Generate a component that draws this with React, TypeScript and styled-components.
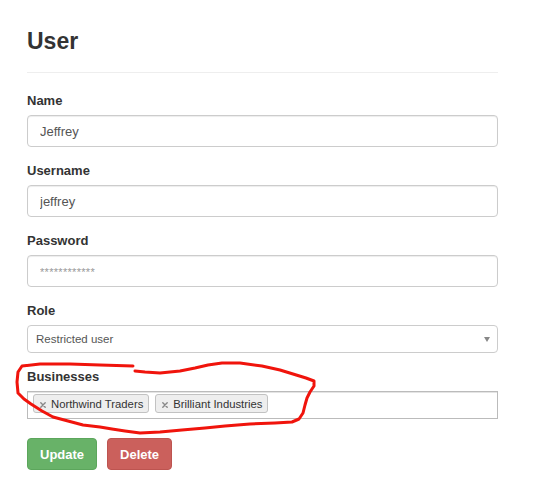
import React from 'react';
import styled, { createGlobalStyle } from 'styled-components';

const GlobalStyle = createGlobalStyle`
  body {
    margin: 0;
    background: #fff;
    color: #333;
    font-family: "Liberation Sans", Arial, sans-serif;
  }
`;

const Page = styled.div`
  position: relative;
  width: 533px;
  height: 500px;
  box-sizing: border-box;
  padding: 28px 35px 0 27px;
`;

const Title = styled.h1`
  margin: 0 0 18px;
  font-size: 23px;
  line-height: 26px;
  font-weight: bold;
  color: #333;
`;

const Divider = styled.hr`
  margin: 0 0 19px;
  border: 0;
  border-top: 1px solid #eee;
`;

const FormGroup = styled.div`
  margin-bottom: 15px;
`;

const Label = styled.label`
  display: block;
  margin-bottom: 5px;
  font-size: 13px;
  line-height: 18px;
  font-weight: bold;
  color: #333;
`;

const TextInput = styled.input`
  display: block;
  box-sizing: border-box;
  width: 100%;
  height: 32px;
  margin: 0;
  padding: 0 12px;
  font-family: "Liberation Sans", Arial, sans-serif;
  font-size: 13px;
  color: #555;
  background: #fff;
  border: 1px solid #ccc;
  border-radius: 4px;
  box-shadow: inset 0 1px 1px rgba(0, 0, 0, 0.075);
  outline: none;

  &::placeholder {
    color: #999;
    font-size: 11px;
    letter-spacing: 0.3px;
  }
`;

const SelectBox = styled.div`
  display: flex;
  align-items: center;
  justify-content: space-between;
  box-sizing: border-box;
  height: 28px;
  padding: 0 7px 0 8px;
  font-size: 11.5px;
  color: #555;
  background: #fff;
  border: 1px solid #ccc;
  border-radius: 4px;
`;

const Caret = styled.span`
  width: 0;
  height: 0;
  border-left: 3px solid transparent;
  border-right: 3px solid transparent;
  border-top: 5px solid #888;
`;

const TagBox = styled.div`
  display: flex;
  align-items: flex-start;
  gap: 6px;
  box-sizing: border-box;
  height: 28px;
  padding: 2px 5px;
  background: #fff;
  border: 1px solid #bbb;
  box-shadow: inset 0 1px 0 #e4e4e4;
`;

const Tag = styled.span`
  display: inline-flex;
  align-items: center;
  gap: 5px;
  box-sizing: border-box;
  height: 19px;
  padding: 0 5px 0 6px;
  font-size: 11.3px;
  color: #333;
  background: #eee;
  border: 1px solid #c2c2c2;
  border-radius: 3px;
`;

const Actions = styled.div`
  display: flex;
  gap: 10px;
  margin-top: 19px;
`;

const Button = styled.button<{ $tone: 'success' | 'danger' }>`
  box-sizing: border-box;
  height: 32px;
  padding: 0 12px;
  font-family: "Liberation Sans", Arial, sans-serif;
  font-size: 13px;
  font-weight: bold;
  color: #fff;
  border-radius: 4px;
  cursor: pointer;
  background: ${p => (p.$tone === 'success' ? '#68b268' : '#cb605c')};
  border: 1px solid ${p => (p.$tone === 'success' ? '#5ca65c' : '#bd5450')};
`;

const Scribble = styled.svg`
  position: absolute;
  top: 0;
  left: 0;
  pointer-events: none;
`;

const RemoveIcon = () => (
  <svg width="6" height="6" viewBox="0 0 6 6" style={{ marginTop: 2 }}>
    <path d="M0.8 0.8 L5.2 5.2 M5.2 0.8 L0.8 5.2" stroke="#888" strokeWidth="1.4" strokeLinecap="round" />
  </svg>
);

const businesses = ['Northwind Traders', 'Brilliant Industries'];

const App: React.FC = () => {
  return (
    <>
      <GlobalStyle />
      <Page>
        <Title>User</Title>
        <Divider />

        <FormGroup>
          <Label>Name</Label>
          <TextInput defaultValue="Jeffrey" />
        </FormGroup>

        <FormGroup>
          <Label>Username</Label>
          <TextInput defaultValue="jeffrey" />
        </FormGroup>

        <FormGroup>
          <Label>Password</Label>
          <TextInput placeholder="************" />
        </FormGroup>

        <FormGroup>
          <Label>Role</Label>
          <SelectBox>
            <span>Restricted user</span>
            <Caret />
          </SelectBox>
        </FormGroup>

        <FormGroup>
          <Label>Businesses</Label>
          <TagBox>
            {businesses.map(b => (
              <Tag key={b}>
                <RemoveIcon />
                {b}
              </Tag>
            ))}
          </TagBox>
        </FormGroup>

        <Actions>
          <Button $tone="success">Update</Button>
          <Button $tone="danger">Delete</Button>
        </Actions>

        {/* red hand-drawn highlight around the businesses field */}
        <Scribble width="533" height="500" viewBox="0 0 533 500">
          <path
            d="M133 366 L100 365 L70 364 L40 364 L22 366 L18 372 L17 382 L18 393 L24 399 L31 404 L42 411 L53 417 L68 421 L83 425 L100 427 L112 429 L125 431 L140 433 L160 432 L182 430 L205 428 L225 426 L250 424 L275 423 L292 422 L299 419 L303 413 L305 405 L307 398 L310 392 L314 386 L314 381 L306 378 L293 374 L280 370 L262 366 L240 363 L222 363 L208 365 L195 368 L180 371 L160 373 L145 372 L135 371"
            fill="none"
            stroke="#f0140c"
            strokeWidth="3"
            strokeLinecap="round"
            strokeLinejoin="round"
          />
        </Scribble>
      </Page>
    </>
  );
};

export default App;
